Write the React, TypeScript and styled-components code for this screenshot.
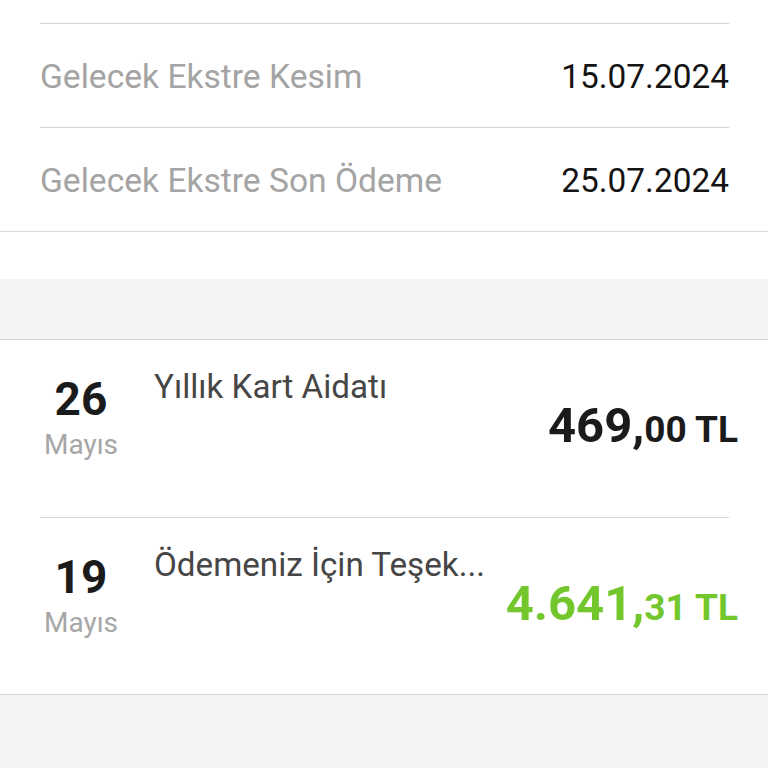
import React from "react";
import styled, { createGlobalStyle } from "styled-components";

const Global = createGlobalStyle`
  html, body { margin: 0; padding: 0; background: #f3f3f3; }
  body { font-family: Roboto, "Noto Sans", Arial, sans-serif; -webkit-font-smoothing: antialiased; }
  * { box-sizing: border-box; }
`;

const Page = styled.div`
  width: 768px;
  display: flex;
  flex-direction: column;
`;

const InfoSection = styled.section`
  background: #ffffff;
  padding-top: 23px;
  padding-bottom: 47px;
`;

const InfoList = styled.div`
  border-bottom: 1px solid #d9d9d9;
`;

const InfoRow = styled.div`
  margin: 0 39px 0 40px;
  height: 104px;
  border-top: 1px solid #d4d4d4;
  display: flex;
  align-items: center;
  justify-content: space-between;
  padding-top: 1px;
`;

const Label = styled.span`
  font-size: 33.6px;
  color: #a4a4a4;
`;

const Value = styled.span`
  font-size: 33.4px;
  color: #141414;
`;

const Gap = styled.div`
  height: 60px;
  background: #f3f3f3;
`;

const Card = styled.section`
  background: #ffffff;
  border-top: 1px solid #d6d6d6;
  border-bottom: 1px solid #d6d6d6;
`;

const TxRow = styled.div<{ $first?: boolean }>`
  margin: 0 39px 0 40px;
  height: 177px;
  border-top: ${(p) => (p.$first ? "none" : "1px solid #d6d6d6")};
  display: grid;
  grid-template-columns: 82px minmax(0, 1fr) auto;
  column-gap: 32px;
  padding-top: 26px;
`;

const DateCol = styled.div`
  display: flex;
  flex-direction: column;
  align-items: center;
  margin-top: 10px;
`;

const Day = styled.span`
  font-size: 46px;
  line-height: 46px;
  font-weight: 700;
  color: #1b1b1b;
`;

const Month = styled.span`
  font-size: 28px;
  line-height: 28px;
  color: #a6a6a6;
  margin-top: 9px;
`;

const Title = styled.span`
  font-size: 33.2px;
  line-height: 41px;
  color: #464646;
  white-space: nowrap;
`;

const Amount = styled.div<{ $green?: boolean }>`
  align-self: start;
  margin-top: 36px;
  margin-right: -9px;
  font-weight: 700;
  color: ${(p) => (p.$green ? "#73c72d" : "#1b1b1b")};
  white-space: nowrap;
  line-height: 48px;
`;

const Main = styled.span`
  font-size: 49px;
`;

const Cents = styled.span`
  font-size: 37px;
`;

const infos = [
  { label: "Gelecek Ekstre Kesim", value: "15.07.2024" },
  { label: "Gelecek Ekstre Son Ödeme", value: "25.07.2024" },
];

const txs = [
  { day: "26", month: "Mayıs", title: "Yıllık Kart Aidatı", main: "469,", cents: "00 TL", green: false },
  { day: "19", month: "Mayıs", title: "Ödemeniz İçin Teşek...", main: "4.641,", cents: "31 TL", green: true },
];

export default function App() {
  return (
    <Page>
      <Global />
      <InfoSection>
        <InfoList>
          {infos.map((i) => (
            <InfoRow key={i.label}>
              <Label>{i.label}</Label>
              <Value>{i.value}</Value>
            </InfoRow>
          ))}
        </InfoList>
      </InfoSection>
      <Gap />
      <Card>
        {txs.map((t, idx) => (
          <TxRow key={t.day} $first={idx === 0}>
            <DateCol>
              <Day>{t.day}</Day>
              <Month>{t.month}</Month>
            </DateCol>
            <Title>{t.title}</Title>
            <Amount $green={t.green}>
              <Main>{t.main}</Main>
              <Cents>{t.cents}</Cents>
            </Amount>
          </TxRow>
        ))}
      </Card>
    </Page>
  );
}
